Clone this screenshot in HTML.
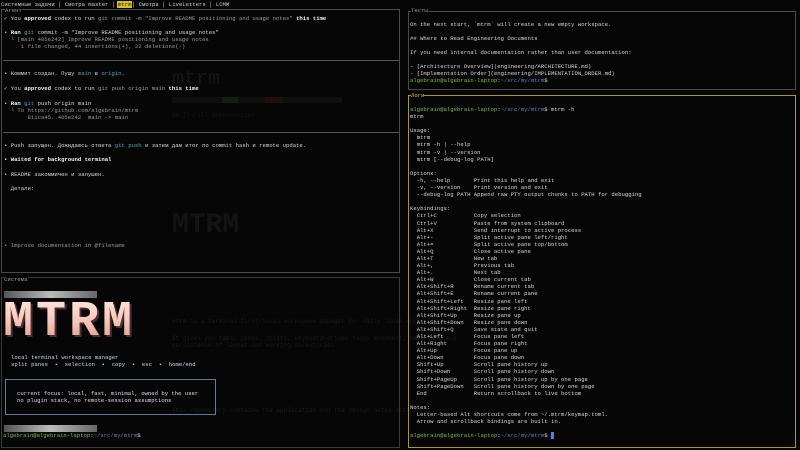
<!DOCTYPE html>
<html><head><meta charset="utf-8"><style>
*{margin:0;padding:0;box-sizing:border-box}
body{width:800px;height:450px;background:#060606;overflow:hidden;position:relative;font-family:"Liberation Mono","DejaVu Sans Mono","Noto Sans CJK SC",monospace;font-size:5.6px;color:#d6d6d6}
.l{position:absolute;white-space:pre;line-height:7px;height:7px}
.b{font-weight:bold;color:#f2f2f2}
.g{color:#76c23a}.p{color:#5a7fc0}.c{color:#3fb0b8}.d{color:#9a9a9a}
.box{position:absolute;border:1px solid #555}
.ghost{position:absolute;color:#161616;white-space:pre}
</style></head><body>
<!-- ghost background -->
<div class="ghost" style="left:172px;top:68px;font-size:20px">mtrm</div>
<div class="ghost" style="left:172px;top:210px;font-size:28px;font-weight:bold;color:#141414">MTRM</div>
<div style="position:absolute;left:172px;top:97px;width:170px;height:6px;background:#0f0f0f"></div>
<div style="position:absolute;left:222px;top:97px;width:16px;height:6px;background:#122012"></div>
<div style="position:absolute;left:265px;top:97px;width:18px;height:6px;background:#1e1210"></div>
<div class="ghost" style="left:172px;top:112px;font-size:6px">## Install dependencies</div>
<div class="ghost" style="left:172px;top:318px;font-size:6px;color:#1c1c1c">mtrm is a terminal-first local workspace manager for daily local work with panes</div>
<div class="ghost" style="left:172px;top:335px;font-size:6px;color:#1c1c1c">It gives you tabs, panes, splits, keyboard-driven focus movement, selection and</div>
<div class="ghost" style="left:172px;top:342px;font-size:6px;color:#1c1c1c">persistence of layout and working directories</div>
<div class="ghost" style="left:172px;top:407px;font-size:6px;color:#1c1c1c">This repository contains the application and the design notes behind it</div>

<!-- tab bar -->
<div class="l" style="left:1px;top:1px;color:#cfcfcf">Системные задачи │ Смотра master │     │ Смотра │ LiveLetters │ LCMM</div>
<div class="l" style="left:117px;top:1px;background:#d8c020;color:#222;padding:0 1px">mtrm</div>

<!-- left top pane -->
<div class="box" style="left:1px;top:9px;width:399px;height:264px;border-color:#4a4a4a"></div>
<div class="l d" style="left:5px;top:7px;background:#060606">Агент</div>
<div class="l" style="left:4px;top:15px">✓ You <span class="b">approved</span> codex to run <span class="d">git commit -m "Improve README positioning and usage notes"</span> <span class="b">this time</span></div>
<div class="l" style="left:4px;top:29px">• <span class="b">Ran</span> <span class="c">git</span> commit -m "Improve README positioning and usage notes"</div>
<div class="l d" style="left:4px;top:36px">  └ [main 405e242] Improve README positioning and usage notes</div>
<div class="l d" style="left:4px;top:43px">     1 file changed, 44 insertions(+), 22 deletions(-)</div>
<div style="position:absolute;left:3px;top:60px;width:396px;height:1px;background:#555"></div>
<div class="l" style="left:4px;top:70px">• Коммит создан. Пушу <span class="c">main</span> в <span class="c">origin</span>.</div>
<div class="l" style="left:4px;top:85px">✓ You <span class="b">approved</span> codex to run <span class="d">git push origin main</span> <span class="b">this time</span></div>
<div class="l" style="left:4px;top:100px">• <span class="b">Ran</span> <span class="c">git</span> push origin main</div>
<div class="l d" style="left:4px;top:107px">  └ To https://github.com/algebrain/mtrm</div>
<div class="l d" style="left:4px;top:114px">       811ca45..405e242  main -> main</div>
<div style="position:absolute;left:3px;top:132px;width:396px;height:1px;background:#555"></div>
<div class="l" style="left:4px;top:142px">• Push запущен. Дожидаюсь ответа <span class="c">git push</span> и затем дам итог по commit hash и remote update.</div>
<div class="l b" style="left:4px;top:156px">• Waited for background terminal</div>
<div class="l" style="left:4px;top:171px">• README закоммичен и запушен.</div>
<div class="l" style="left:4px;top:185px">  Детали:</div>
<div class="l d" style="left:4px;top:242px">• Improve documentation in @filename</div>

<!-- left bottom pane -->
<div class="box" style="left:1px;top:277px;width:399px;height:171px;border-color:#3a3a3a"></div>
<div class="l d" style="left:4px;top:276px;background:#060606">Система</div>
<div style="position:absolute;left:4px;top:291px;width:93px;height:7px;background:linear-gradient(90deg,#555,#bbb 50%,#666)"></div>
<div style="position:absolute;left:3px;top:298px;font-family:'Liberation Mono',monospace;font-weight:bold;font-size:50px;line-height:50px;letter-spacing:3px;transform:scaleY(1.0);transform-origin:top left;background:linear-gradient(180deg,#fde6d8 0%,#f8c8b8 45%,#d8907c 100%);-webkit-background-clip:text;background-clip:text;color:transparent;filter:drop-shadow(2px 2px 0 #4a2c3a)">MTRM</div>
<div class="l" style="left:11px;top:354px;color:#cfd8e8">local terminal workspace manager</div>
<div class="l" style="left:11px;top:361px;color:#cfd8e8">split panes  •  selection  •  copy  •  esc  •  home/end</div>
<div class="box" style="left:5px;top:379px;width:211px;height:36px;border-color:#6a7a8a"></div>
<div class="l" style="left:17px;top:390px;color:#dde">current focus: local, fast, minimal, owned by the user</div>
<div class="l" style="left:17px;top:397px;color:#dde">no plugin stack, no remote-session assumptions</div>
<div style="position:absolute;left:4px;top:425px;width:93px;height:7px;background:linear-gradient(90deg,#555,#bbb 50%,#666)"></div>
<div class="l" style="left:3px;top:432px"><span class="g">algebrain@algebrain-laptop</span>:<span class="p">~/src/my/mtrm</span>$</div>

<!-- right top pane -->
<div class="box" style="left:408px;top:11px;width:388px;height:79px;border-color:#4a4a4a"></div>
<div class="l d" style="left:411px;top:7px;background:#060606">Тесты</div>
<div class="l" style="left:410px;top:21px">On the next start, `mtrm` will create a new empty workspace.</div>
<div class="l" style="left:410px;top:35px">## Where to Read Engineering Documents</div>
<div class="l" style="left:410px;top:49px">If you need internal documentation rather than user documentation:</div>
<div class="l" style="left:410px;top:63px">- [Architecture Overview](engineering/ARCHITECTURE.md)</div>
<div class="l" style="left:410px;top:70px">- [Implementation Order](engineering/IMPLEMENTATION_ORDER.md)</div>
<div class="l" style="left:410px;top:77px"><span class="g">algebrain@algebrain-laptop</span>:<span class="p">~/src/my/mtrm</span>$</div>

<!-- right bottom pane -->
<div class="box" style="left:408px;top:95px;width:388px;height:353px;border-color:#a89a2a"></div>
<div class="l" style="left:411px;top:92px;background:#060606;color:#d8c840">Логи</div>
<div class="l" style="left:410px;top:106px;line-height:7.1px;height:auto"><span class="g">algebrain@algebrain-laptop</span>:<span class="p">~/src/my/mtrm</span>$ mtrm -h
mtrm

Usage:
  mtrm
  mtrm -h | --help
  mtrm -v | --version
  mtrm [--debug-log PATH]

Options:
  -h, --help       Print this help and exit
  -v, --version    Print version and exit
  --debug-log PATH Append raw PTY output chunks to PATH for debugging

Keybindings:
  Ctrl+C           Copy selection
  Ctrl+V           Paste from system clipboard
  Alt+X            Send interrupt to active process
  Alt+-            Split active pane left/right
  Alt+=            Split active pane top/bottom
  Alt+Q            Close active pane
  Alt+T            New tab
  Alt+,            Previous tab
  Alt+.            Next tab
  Alt+W            Close current tab
  Alt+Shift+R      Rename current tab
  Alt+Shift+E      Rename current pane
  Alt+Shift+Left   Resize pane left
  Alt+Shift+Right  Resize pane right
  Alt+Shift+Up     Resize pane up
  Alt+Shift+Down   Resize pane down
  Alt+Shift+Q      Save state and quit
  Alt+Left         Focus pane left
  Alt+Right        Focus pane right
  Alt+Up           Focus pane up
  Alt+Down         Focus pane down
  Shift+Up         Scroll pane history up
  Shift+Down       Scroll pane history down
  Shift+PageUp     Scroll pane history up by one page
  Shift+PageDown   Scroll pane history down by one page
  End              Return scrollback to live bottom

Notes:
  Letter-based Alt shortcuts come from ~/.mtrm/keymap.toml.
  Arrow and scrollback bindings are built in.

<span class="g">algebrain@algebrain-laptop</span>:<span class="p">~/src/my/mtrm</span>$ <span style="background:#5a7fe0">&nbsp;</span></div>
</body></html>
